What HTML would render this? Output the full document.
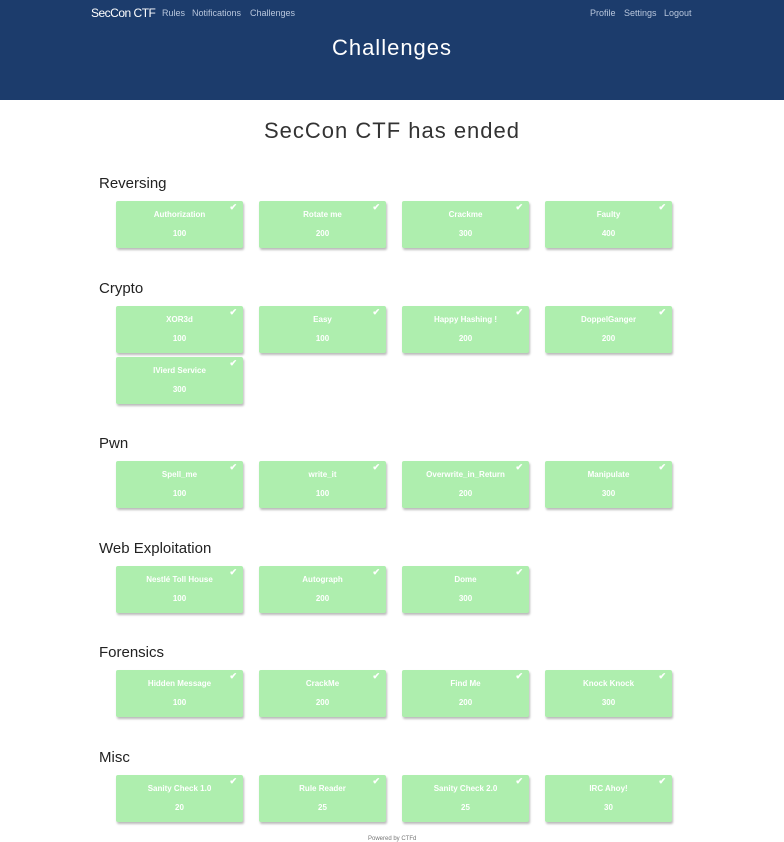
<!DOCTYPE html>
<html><head><meta charset="utf-8"><style>
*{margin:0;padding:0;box-sizing:border-box}
body{width:784px;height:841px;overflow:hidden;background:#fff;font-family:"Liberation Sans",sans-serif;position:relative}
.nav{position:absolute;left:0;top:0;width:784px;height:100px;background:#1c3c6c}
.nav span{position:absolute;top:8px;font-size:9px;color:#b8c6dc}
.brand{font-size:12px!important;color:#fff!important;left:91px;top:6px!important;letter-spacing:-0.5px}
h1{position:absolute;top:35px;left:0;width:784px;text-align:center;color:#fff;font-weight:normal;font-size:22px;letter-spacing:1px}
h2{position:absolute;top:118px;left:0;width:784px;text-align:center;color:#333;font-weight:normal;font-size:22px;letter-spacing:1px}
h3{position:absolute;left:99px;font-weight:normal;font-size:15px;color:#222}
.c{position:absolute;width:127px;height:47px;background:#aeeeae;border-radius:2px;box-shadow:1px 2px 2px #bbb;color:#fff;font-weight:bold;font-size:8px;text-align:center}
.c .n{position:absolute;top:9px;width:100%}
.c .p{position:absolute;top:28px;width:100%}
.c:after{content:"✔";position:absolute;right:6px;top:1px;font-size:9px;color:#fff}
.f{position:absolute;top:836px;left:368px;font-size:6px;color:#777}
</style></head><body>
<div class="nav">
<span class="brand">SecCon CTF</span>
<span style="left:162px">Rules</span><span style="left:192px">Notifications</span><span style="left:250px">Challenges</span>
<span style="left:590px">Profile</span><span style="left:624px">Settings</span><span style="left:664px">Logout</span>
<h1>Challenges</h1>
</div>
<h2>SecCon CTF has ended</h2>

<h3 style="top:175px">Reversing</h3>
<div class="c" style="left:116px;top:201px"><div class="n">Authorization</div><div class="p">100</div></div>
<div class="c" style="left:259px;top:201px"><div class="n">Rotate me</div><div class="p">200</div></div>
<div class="c" style="left:402px;top:201px"><div class="n">Crackme</div><div class="p">300</div></div>
<div class="c" style="left:545px;top:201px"><div class="n">Faulty</div><div class="p">400</div></div>

<h3 style="top:280px">Crypto</h3>
<div class="c" style="left:116px;top:306px"><div class="n">XOR3d</div><div class="p">100</div></div>
<div class="c" style="left:259px;top:306px"><div class="n">Easy</div><div class="p">100</div></div>
<div class="c" style="left:402px;top:306px"><div class="n">Happy Hashing !</div><div class="p">200</div></div>
<div class="c" style="left:545px;top:306px"><div class="n">DoppelGanger</div><div class="p">200</div></div>
<div class="c" style="left:116px;top:357px"><div class="n">IVierd Service</div><div class="p">300</div></div>

<h3 style="top:435px">Pwn</h3>
<div class="c" style="left:116px;top:461px"><div class="n">Spell_me</div><div class="p">100</div></div>
<div class="c" style="left:259px;top:461px"><div class="n">write_it</div><div class="p">100</div></div>
<div class="c" style="left:402px;top:461px"><div class="n">Overwrite_in_Return</div><div class="p">200</div></div>
<div class="c" style="left:545px;top:461px"><div class="n">Manipulate</div><div class="p">300</div></div>

<h3 style="top:540px">Web Exploitation</h3>
<div class="c" style="left:116px;top:566px"><div class="n">Nestlé Toll House</div><div class="p">100</div></div>
<div class="c" style="left:259px;top:566px"><div class="n">Autograph</div><div class="p">200</div></div>
<div class="c" style="left:402px;top:566px"><div class="n">Dome</div><div class="p">300</div></div>

<h3 style="top:644px">Forensics</h3>
<div class="c" style="left:116px;top:670px"><div class="n">Hidden Message</div><div class="p">100</div></div>
<div class="c" style="left:259px;top:670px"><div class="n">CrackMe</div><div class="p">200</div></div>
<div class="c" style="left:402px;top:670px"><div class="n">Find Me</div><div class="p">200</div></div>
<div class="c" style="left:545px;top:670px"><div class="n">Knock Knock</div><div class="p">300</div></div>

<h3 style="top:749px">Misc</h3>
<div class="c" style="left:116px;top:775px"><div class="n">Sanity Check 1.0</div><div class="p">20</div></div>
<div class="c" style="left:259px;top:775px"><div class="n">Rule Reader</div><div class="p">25</div></div>
<div class="c" style="left:402px;top:775px"><div class="n">Sanity Check 2.0</div><div class="p">25</div></div>
<div class="c" style="left:545px;top:775px"><div class="n">IRC Ahoy!</div><div class="p">30</div></div>
<div class="f">Powered by CTFd</div>
</body></html>
